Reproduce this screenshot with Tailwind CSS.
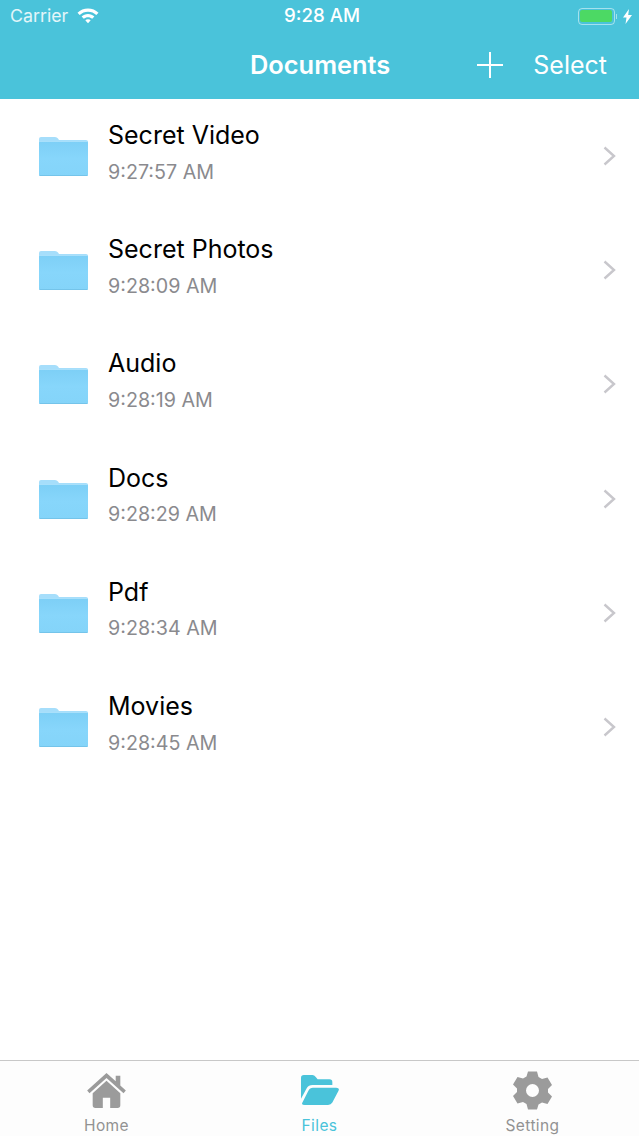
<!DOCTYPE html>
<html lang="en">
<head>
  <meta charset="UTF-8" />
  <meta name="viewport" content="width=device-width, initial-scale=1.0" />
  <title>Documents</title>
  <script src="https://cdn.jsdelivr.net/npm/@tailwindcss/browser@4"></script>
</head>
<body class="bg-white font-['Inter',sans-serif]">
  <svg class="absolute w-0 h-0">
    <defs>
      <linearGradient id="folderBody" x1="0" y1="0" x2="0" y2="1">
        <stop offset="0" stop-color="#7dcff6" />
        <stop offset="0.500" stop-color="#87d6fb" />
        <stop offset="1" stop-color="#84d4f9" />
      </linearGradient>
      <symbol id="folder" viewBox="0 0 49 40">
        <path d="M0 3q0-2 2-2h14q2 0 3 1.500l1 1.500h27q2 0 2 2v5H0z" fill="#a6defb" />
        <rect x="0" y="5" width="49" height="35" rx="1.500" fill="url(#folderBody)" />
        <rect x="0" y="5" width="49" height="1" fill="#a9e0fb" />
        <rect x="0.500" y="39" width="48" height="1" fill="#74c4ea" />
      </symbol>
      <symbol id="chevron" viewBox="0 0 13 20">
        <path d="M1.500 1.500 11 10l-9.500 8.500" fill="none" stroke="#c8c7cc" stroke-width="2.400" />
      </symbol>
    </defs>
  </svg>

  <div class="flex flex-col h-[1136px] w-[639px] overflow-hidden">
    <!-- header -->
    <header class="h-[99px] shrink-0 bg-[#4ac3da] text-white">
      <div class="flex items-center justify-between h-[32px] pl-[10px] pr-[7px] text-[17.800px] relative">
        <div class="flex items-center gap-[9px] text-white/85">
          <span>Carrier</span>
          <svg width="22" height="16" viewBox="0 0 22 16" fill="white">
            <path d="M11 .5C6.900.5 3.300 2 .5 4.700L2.700 7C4.900 4.900 7.800 3.700 11 3.700s6.100 1.200 8.300 3.300l2.200-2.300C18.700 2 15.100.5 11 .5z" />
            <path d="M11 6c-2.500 0-4.700 1-6.400 2.500l2.200 2.300C7.900 9.800 9.400 9.200 11 9.200s3.100.6 4.200 1.600l2.200-2.300C15.700 7 13.500 6 11 6z" />
            <path d="M11 11.300c-1.100 0-2 .4-2.700 1L11 15.200l2.700-2.900c-.7-.6-1.600-1-2.700-1z" />
          </svg>
        </div>
        <span class="absolute left-[284px] text-[18.700px] font-medium">9:28 AM</span>
        <div class="flex items-center gap-[6px]">
          <div class="flex items-center">
            <div class="w-[37px] h-[17px] rounded-[4px] border border-white/50 p-[1.500px]">
              <div class="h-full rounded-[2px] bg-[#4cd964]"></div>
            </div>
            <div class="w-[1.500px] h-[5px] bg-white/50 ml-[1px]"></div>
          </div>
          <svg width="9" height="15" viewBox="0 0 9 15" fill="white">
            <path d="M6 0 0 8.500h3.500L2.500 15 9 6H5.200z" />
          </svg>
        </div>
      </div>
      <nav class="flex items-center h-[66px] relative">
        <h1 class="absolute left-[250px] text-[25.400px] font-semibold leading-none">Documents</h1>
        <div class="ml-auto flex items-center gap-[30px] pr-[32px]">
          <svg width="26" height="26" viewBox="0 0 26 26" fill="none" stroke="white" stroke-width="2">
            <path d="M13 0v26M0 13h26" />
          </svg>
          <span class="text-[25px] leading-none">Select</span>
        </div>
      </nav>
    </header>

    <!-- folders -->
    <main class="flex-1">
      <ul>
        <li class="flex items-center h-[114.200px] pl-[39px] pr-[23px]">
          <svg class="w-[49px] h-[40px] shrink-0"><use href="#folder" /></svg>
          <div class="ml-[20px] flex-1 -mt-[9.500px]">
            <div class="text-[25px] leading-[32px] text-black">Secret Video</div>
            <div class="text-[19.700px] leading-[24px] mt-[8.500px] text-[#8a8a8e]">9:27:57 AM</div>
          </div>
          <svg class="w-[13px] h-[20px]"><use href="#chevron" /></svg>
        </li>
        <li class="flex items-center h-[114.200px] pl-[39px] pr-[23px]">
          <svg class="w-[49px] h-[40px] shrink-0"><use href="#folder" /></svg>
          <div class="ml-[20px] flex-1 -mt-[9.500px]">
            <div class="text-[25px] leading-[32px] text-black">Secret Photos</div>
            <div class="text-[19.700px] leading-[24px] mt-[8.500px] text-[#8a8a8e]">9:28:09 AM</div>
          </div>
          <svg class="w-[13px] h-[20px]"><use href="#chevron" /></svg>
        </li>
        <li class="flex items-center h-[114.200px] pl-[39px] pr-[23px]">
          <svg class="w-[49px] h-[40px] shrink-0"><use href="#folder" /></svg>
          <div class="ml-[20px] flex-1 -mt-[9.500px]">
            <div class="text-[25px] leading-[32px] text-black">Audio</div>
            <div class="text-[19.700px] leading-[24px] mt-[8.500px] text-[#8a8a8e]">9:28:19 AM</div>
          </div>
          <svg class="w-[13px] h-[20px]"><use href="#chevron" /></svg>
        </li>
        <li class="flex items-center h-[114.200px] pl-[39px] pr-[23px]">
          <svg class="w-[49px] h-[40px] shrink-0"><use href="#folder" /></svg>
          <div class="ml-[20px] flex-1 -mt-[9.500px]">
            <div class="text-[25px] leading-[32px] text-black">Docs</div>
            <div class="text-[19.700px] leading-[24px] mt-[8.500px] text-[#8a8a8e]">9:28:29 AM</div>
          </div>
          <svg class="w-[13px] h-[20px]"><use href="#chevron" /></svg>
        </li>
        <li class="flex items-center h-[114.200px] pl-[39px] pr-[23px]">
          <svg class="w-[49px] h-[40px] shrink-0"><use href="#folder" /></svg>
          <div class="ml-[20px] flex-1 -mt-[9.500px]">
            <div class="text-[25px] leading-[32px] text-black">Pdf</div>
            <div class="text-[19.700px] leading-[24px] mt-[8.500px] text-[#8a8a8e]">9:28:34 AM</div>
          </div>
          <svg class="w-[13px] h-[20px]"><use href="#chevron" /></svg>
        </li>
        <li class="flex items-center h-[114.200px] pl-[39px] pr-[23px]">
          <svg class="w-[49px] h-[40px] shrink-0"><use href="#folder" /></svg>
          <div class="ml-[20px] flex-1 -mt-[9.500px]">
            <div class="text-[25px] leading-[32px] text-black">Movies</div>
            <div class="text-[19.700px] leading-[24px] mt-[8.500px] text-[#8a8a8e]">9:28:45 AM</div>
          </div>
          <svg class="w-[13px] h-[20px]"><use href="#chevron" /></svg>
        </li>
      </ul>
    </main>

    <!-- tab bar -->
    <footer class="h-[76px] shrink-0 border-t border-[#c8c8c8] bg-[#fdfdfd] grid grid-cols-3 text-[15.500px] tracking-[0.4px] leading-none text-[#929292]">
      <div class="flex flex-col items-center pt-[9px]">
        <div class="flex items-center justify-center h-[40px]">
          <svg width="39" height="35" viewBox="0 0 42 38" fill="#9b9b9b">
            <path d="M21 0 0 19l2.500 3L21 5.500 39.500 22l2.500-3-6-5.500V3h-5v6z" />
            <path d="M21 8.500 6 22v13q0 3 3 3h8V27h8v11h8q3 0 3-3V22z" />
          </svg>
        </div>
        <span class="mt-[8px]">Home</span>
      </div>
      <div class="flex flex-col items-center pt-[9px] text-[#4ac3da]">
        <div class="flex items-center justify-center h-[40px]">
          <svg width="38" height="30" viewBox="1 3 40 31.500" fill="#4ac3da">
            <path d="M1 6q0-3 3-3h9q2 0 3.500 2l2 2.500H31q3 0 3 3v3H13q-4 0-6 3.500l-6 11z" />
            <path d="M13.500 16.500H38q4 0 2.500 3L34 32q-1.500 2.500-4.500 2.500H5q-4 0-2.500-2.500l6-12q2-3.500 5-3.500z" />
          </svg>
        </div>
        <span class="mt-[8px]">Files</span>
      </div>
      <div class="flex flex-col items-center pt-[9px]">
        <div class="flex items-center justify-center h-[40px]">
          <svg width="39" height="39" viewBox="1 0 39 38" fill="#9b9b9b" fill-rule="evenodd">
            <path d="M16 0h9l1.500 5.500 3.500 2 5.500-1.500L40 13.500l-4 4v3.500l4 4-4.500 7.500-5.500-1.500-3.500 2L25 38h-9l-1.500-5.500-3.500-2L5.500 32 1 24.500l4-4V17l-4-4 4.500-7.500L11 7l3.500-2zM20.500 12.500a6.500 6.500 0 1 0 0 13 6.500 6.500 0 0 0 0-13z" />
          </svg>
        </div>
        <span class="mt-[8px]">Setting</span>
      </div>
    </footer>
  </div>
</body>
</html>
